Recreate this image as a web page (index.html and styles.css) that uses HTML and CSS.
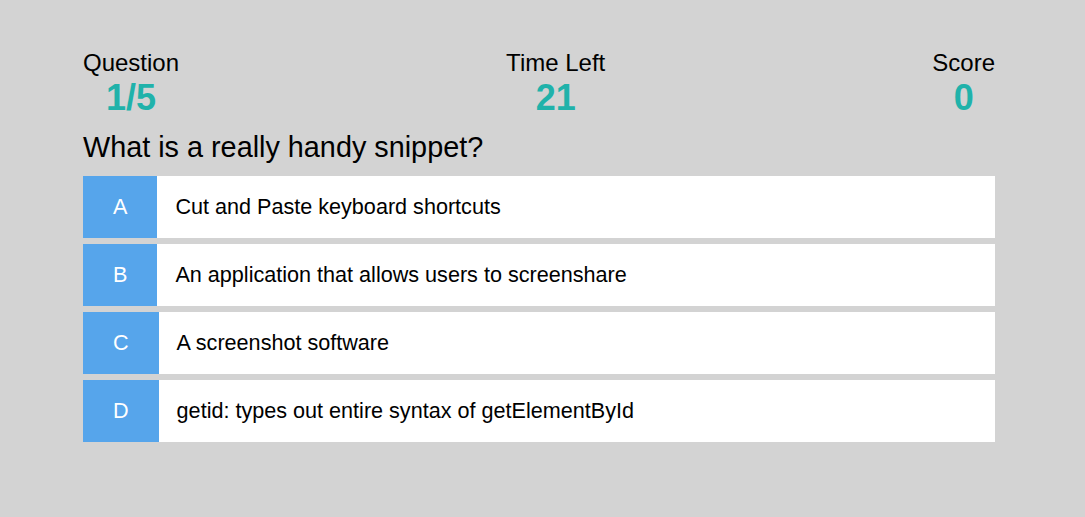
FILE: index.html
```html
<!DOCTYPE html>
<html lang="en">
<head>
<meta charset="utf-8">
<title>Quiz</title>
<link rel="stylesheet" href="styles.css">
</head>
<body>
<div class="container">
  <div class="hud">
    <div class="hud-item">
      <p class="hud-prefix">Question</p>
      <p class="hud-main">1/5</p>
    </div>
    <div class="hud-item">
      <p class="hud-prefix">Time Left</p>
      <p class="hud-main">21</p>
    </div>
    <div class="hud-item">
      <p class="hud-prefix">Score</p>
      <p class="hud-main">0</p>
    </div>
  </div>
  <h2 class="question">What is a really handy snippet?</h2>
  <div class="choices">
    <div class="choice"><p class="choice-prefix">A</p><p class="choice-text">Cut and Paste keyboard shortcuts</p></div>
    <div class="choice"><p class="choice-prefix">B</p><p class="choice-text">An application that allows users to screenshare</p></div>
    <div class="choice"><p class="choice-prefix">C</p><p class="choice-text">A screenshot software</p></div>
    <div class="choice"><p class="choice-prefix">D</p><p class="choice-text">getid: types out entire syntax of getElementById</p></div>
  </div>
</div>
</body>
</html>
```

FILE: styles.css
```css
html, body {
  margin: 0;
  padding: 0;
}
body {
  background: #d3d3d3;
  font-family: "Liberation Sans", Arial, sans-serif;
  color: #000;
}
p, h2 {
  margin: 0;
}
.container {
  width: 912px;
  margin-left: 83px;
  padding-top: 49px;
}
.hud {
  display: flex;
  justify-content: space-between;
}
.hud-item {
  display: flex;
  flex-direction: column;
  align-items: center;
}
.hud-prefix {
  font-size: 24px;
}
.hud-main {
  font-size: 36px;
  font-weight: bold;
  color: #20b2aa;
}
.question {
  font-size: 28.8px;
  font-weight: normal;
  margin-top: 12px;
  margin-bottom: 12px;
}
.choices {
  display: flex;
  flex-direction: column;
  gap: 6px;
}
.choice {
  display: flex;
  background: #fff;
  font-size: 21.6px;
  line-height: 26px;
}
.choice-prefix {
  padding: 18px 30px;
  background: #56a5eb;
  color: #fff;
}
.choice-text {
  padding: 18px;
  flex: 1;
}
```
